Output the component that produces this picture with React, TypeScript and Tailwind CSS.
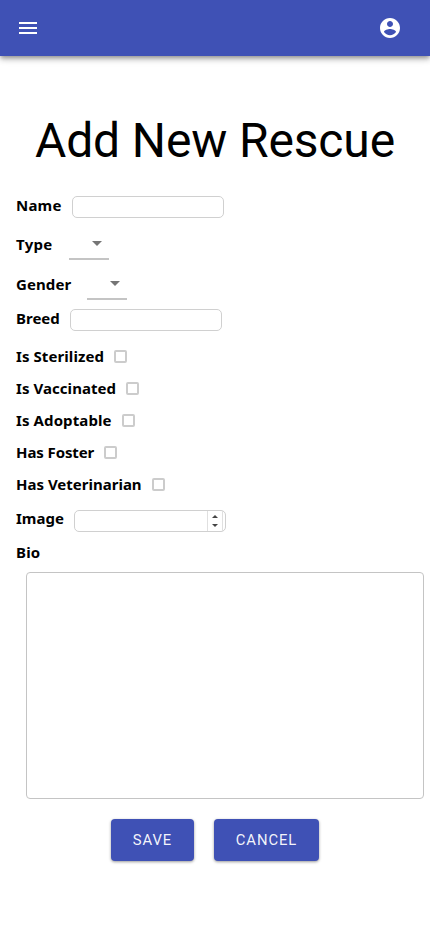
import type { ReactNode } from 'react';

function Row({ label, size, width, children }: { label: string; size: string; width: string; children?: ReactNode }) {
  return (
    <div className={`flex items-center ${size}`}>
      <label className={`shrink-0 whitespace-nowrap text-[15px] leading-5 font-bold text-black ${width}`}>{label}</label>
      {children}
    </div>
  );
}

function TextField() {
  return <input className="mt-1 ml-2.5 h-[22px] w-[152px] rounded-[5px] border border-[#d0d0d0] bg-white px-2 text-sm outline-none" />;
}

function SelectField() {
  return (
    <button className="mt-1 ml-4 flex h-7 w-10 justify-end border-b-2 border-[#c4c4c4] pt-[9px] pr-[7px]">
      <svg width="10" height="5" viewBox="0 0 10 5" fill="#757575"><path d="M0 0h10L5 5z" /></svg>
    </button>
  );
}

function Check() {
  return <span role="checkbox" aria-checked="false" className="mt-px ml-2.5 h-[13px] w-[13px] rounded-[2px] border-2 border-[#cccccc] bg-white" />;
}

const checks = [
  { label: 'Is Sterilized', width: 'w-[88px] tracking-[0.08px]' },
  { label: 'Is Vaccinated', width: 'w-[100px] tracking-[0.06px]' },
  { label: 'Is Adoptable', width: 'w-[96px] tracking-[0.1px]' },
  { label: 'Has Foster', width: 'w-[78px] tracking-[-0.1px]' },
  { label: 'Has Veterinarian', width: 'w-[126px]' },
];

const buttonClass = 'h-[42px] rounded-[4px] bg-[#3f51b5] font-[Roboto,sans-serif] text-[14.8px] tracking-[0.95px] text-white/95 shadow-[0_1px_3px_rgba(0,0,0,0.4)]';

export default function App() {
  return (
    <div className="min-h-[932px] w-full overflow-hidden bg-white font-['Noto_Sans',sans-serif]">
      <header className="flex h-14 items-center justify-between bg-[#3f51b5] pr-7 pl-4 text-white shadow-[0_2px_4px_-1px_rgba(0,0,0,0.3),0_4px_5px_rgba(0,0,0,0.16),0_1px_10px_rgba(0,0,0,0.12)]">
        <button aria-label="Menu">
          <svg width="24" height="24" viewBox="0 0 24 24" fill="currentColor"><path d="M3 18h18v-2H3v2zm0-5h18v-2H3v2zm0-7v2h18V6H3z" /></svg>
        </button>
        <button aria-label="Account">
          <svg width="24" height="24" viewBox="0 0 24 24" fill="currentColor"><path d="M12 2C6.48 2 2 6.48 2 12s4.48 10 10 10 10-4.48 10-10S17.52 2 12 2zm0 3c1.66 0 3 1.34 3 3s-1.34 3-3 3-3-1.34-3-3 1.34-3 3-3zm0 14.2c-2.5 0-4.71-1.28-6-3.22.03-1.99 4-3.08 6-3.08 1.99 0 5.97 1.09 6 3.08-1.29 1.94-3.5 3.22-6 3.22z" /></svg>
        </button>
      </header>
      <h1 className="mt-[57px] h-[74px] text-center font-[Roboto,sans-serif] text-[48px] leading-[56px] tracking-[-0.13px] text-black">Add New Rescue</h1>
      <form className="pl-4">
        <Row label="Name" size="h-9" width="w-[46px] tracking-[0.2px]"><TextField /></Row>
        <Row label="Type" size="h-[42px]" width="w-[37px] tracking-[0.3px]"><SelectField /></Row>
        <Row label="Gender" size="h-[38px]" width="w-[55px] tracking-[0.1px]"><SelectField /></Row>
        <Row label="Breed" size="mb-[7px] h-[30px]" width="w-[44px]"><TextField /></Row>
        {checks.map((item) => (
          <Row key={item.label} label={item.label} size="h-8" width={item.width}><Check /></Row>
        ))}
        <Row label="Image" size="-mt-px mb-px h-[38px]" width="w-[48px]">
          <div className="mt-1.5 ml-2.5 flex h-[22px] w-[152px] justify-end rounded-[5px] border border-[#d0d0d0] bg-white pr-0.5">
            <div className="flex w-4 flex-col items-center justify-between border-x border-[#e0e0e0] py-1">
              <svg width="6" height="3" viewBox="0 0 6 3" fill="#444"><path d="M0 3h6L3 0z" /></svg>
              <svg width="6" height="3" viewBox="0 0 6 3" fill="#444"><path d="M0 0h6L3 3z" /></svg>
            </div>
          </div>
        </Row>
        <Row label="Bio" size="mb-1.5 h-7" width="w-[26px] tracking-[0.2px]" />
        <textarea className="ml-2.5 block h-[227px] w-[398px] resize-none rounded-[4px] border border-[#c4c4c4] bg-white p-2 outline-none" />
        <div className="mt-5 ml-[95px] flex gap-5">
          <button type="button" className={`w-[83px] ${buttonClass}`}>SAVE</button>
          <button type="button" className={`w-[105px] ${buttonClass}`}>CANCEL</button>
        </div>
      </form>
    </div>
  );
}
